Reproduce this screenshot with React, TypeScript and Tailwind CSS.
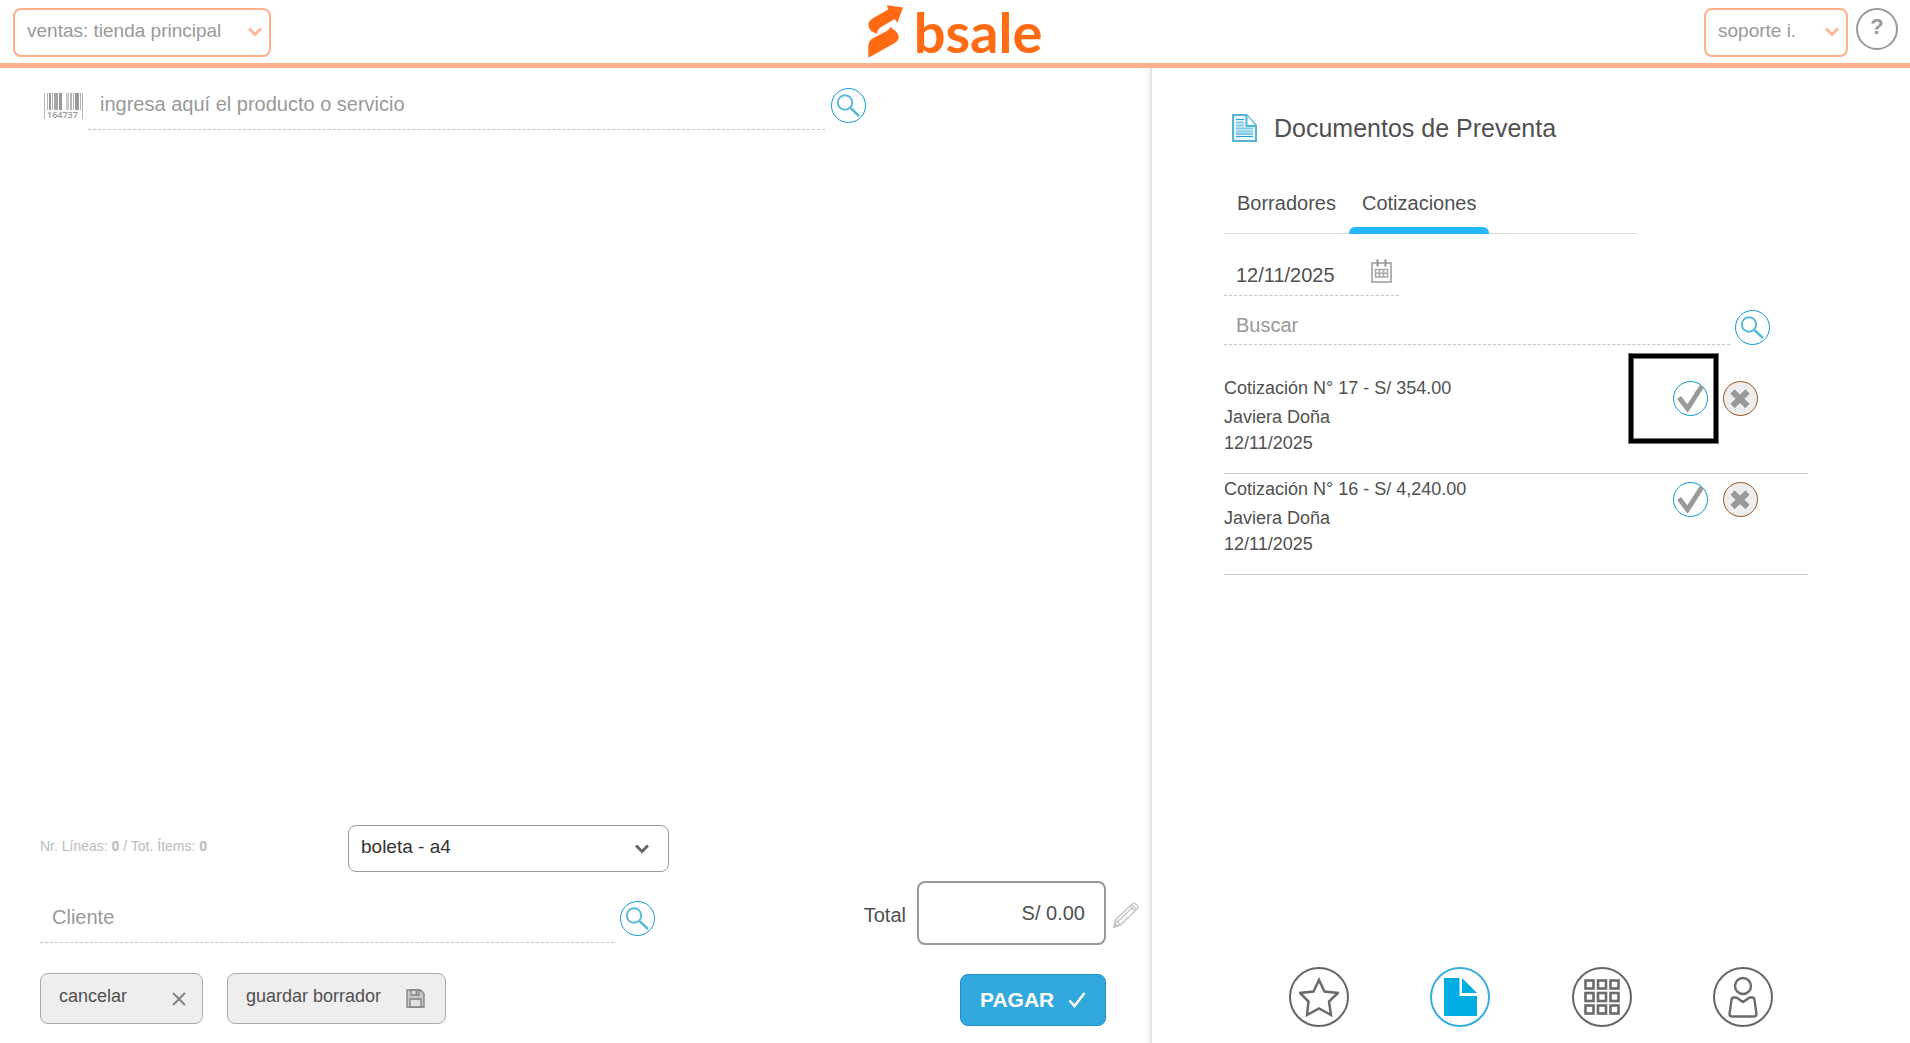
import { useState } from 'react';
import type { ReactNode } from 'react';
import clsx from 'clsx';

type Quote = {
  id: number;
  total: string;
  seller: string;
  date: string;
  highlighted?: boolean;
};

const QUOTES: Quote[] = [
  { id: 17, total: 'S/ 354.00', seller: 'Javiera Doña', date: '12/11/2025', highlighted: true },
  { id: 16, total: 'S/ 4,240.00', seller: 'Javiera Doña', date: '12/11/2025' },
];

const TABS = ['Borradores', 'Cotizaciones'];

const lineInput =
  'border-b border-dashed border-[#c4c4c4] bg-transparent px-3 text-[20px] text-[#505050] outline-none placeholder:text-[#999] placeholder:opacity-100';

/* ---------- icons ---------- */

function Chevron({ className }: { className?: string }) {
  return (
    <svg viewBox="0 0 14 10" className={className} fill="none" stroke="currentColor" strokeWidth="3">
      <path d="M1 1.5l6 6 6-6" />
    </svg>
  );
}

function LogoMark() {
  return (
    <svg viewBox="0 0 106 159" className="h-[53px] w-[35px]" fill="#ff6a13">
      <path d="M57 0L106 7L89 53L81 42L36 68Q28 74 28 87L9 78Q1 68 1 57Q3 46 15 39L61 13Z" />
      <path d="M1 159V124Q2 107 15 100L58 77Q67 73 67 65L86 80Q94 89 93 99Q91 108 81 114Z" />
    </svg>
  );
}

function Barcode() {
  return (
    <svg viewBox="0 0 39 28" className="h-[28px] w-[39px] overflow-visible">
      <g fill="#b5b5b5">
        <rect x="0" y="0" width="1" height="26" />
        <rect x="3" y="0" width="1" height="17" />
        <rect x="5" y="0" width="2" height="17" fill="#999" />
        <rect x="8" y="0" width="1" height="17" />
        <rect x="10" y="0" width="4" height="17" fill="#a5a5a5" />
        <rect x="15" y="0" width="3" height="17" fill="#999" />
        <rect x="22" y="0" width="3" height="17" fill="#ccc" />
        <rect x="26" y="0" width="2" height="17" />
        <rect x="29" y="0" width="1" height="17" />
        <rect x="31" y="0" width="4" height="17" fill="#999" />
        <rect x="36" y="0" width="1" height="17" />
        <rect x="38" y="0" width="1" height="26" />
      </g>
      <text x="3" y="25" fontSize="9" fontWeight="600" fontFamily="Open Sans, sans-serif" fill="#999">
        164737
      </text>
    </svg>
  );
}

function DocumentIcon() {
  return (
    <svg viewBox="0 0 25 28" className="h-[28px] w-[25px]" fill="none" stroke="#52b5d8">
      <path d="M1 1h13.500L24 11.500V27H1z" fill="#eaf7fc" strokeWidth="2" />
      <path d="M14.500 1v11H24" fill="#fff" strokeWidth="2" />
      <path d="M4 8.500h8M4 11.500h8M4 14.500h17M4 17.500h17M4 20h17" stroke="#7fcbe6" strokeWidth="2" />
      <path d="M4 5.500h8M4 22.500h17" stroke="#1d9fd0" />
    </svg>
  );
}

function CalendarIcon() {
  return (
    <svg viewBox="0 0 21 24" className="h-[24px] w-[21px]" fill="none" stroke="#aaa">
      <rect x="1" y="4" width="19" height="19" strokeWidth="1.800" />
      <path d="M6.500 0.500v7M14.500 0.500v7" stroke="#999" strokeWidth="2.200" />
      <path d="M4.500 10.500h12v7.500h-12zM8.500 10.500v7.500M12.500 10.500v7.500M4.500 14.300h12" strokeWidth="1.600" />
    </svg>
  );
}

function FloppyIcon() {
  return (
    <svg viewBox="0 0 19 19" className="h-[19px] w-[19px]" fill="#e0e0e0" stroke="#808080" strokeWidth="1.300">
      <path d="M1 1h13.500L18 4.500V18H1z" fill="#c8c8c8" />
      <path d="M5 1h8v5H5z" />
      <path d="M4 10h11v8H4z" />
      <path d="M10.500 2v3" strokeWidth="2" />
    </svg>
  );
}

function PencilIcon() {
  return (
    <svg viewBox="0 0 26 26" className="h-[26px] w-[26px]" fill="none" stroke="#c8c8c8" strokeWidth="1.500">
      <path d="M1 25l1.500-7L18.500 2.500Q21 0 23.500 2.500T24 7L7.500 23z" />
      <path d="M2.500 18l5 5M17 4l5 5M18.500 2.500l5 5M5 19.500L19.500 5.500" />
      <path d="M1 25l1-4 3 3z" fill="#aaa" />
    </svg>
  );
}

/* ---------- shared controls ---------- */

function SearchButton({ label }: { label: string }) {
  return (
    <button
      type="button"
      aria-label={label}
      className="size-[35px] shrink-0 rounded-full border border-[#0d9ad1] bg-white"
    >
      <svg viewBox="0 0 33 33" className="size-[33px]" fill="none" stroke="#5bb9de" strokeWidth="2">
        <circle cx="13" cy="13.500" r="7.200" />
        <path d="M18 18.500l1.500 1.500" strokeWidth="1.500" />
        <path d="M19 19.500l8 7.500" strokeWidth="2.500" />
      </svg>
    </button>
  );
}

function HeaderSelect({ label, value, className }: { label: string; value: string; className: string }) {
  return (
    <div className={clsx('relative', className)}>
      <select
        aria-label={label}
        className="h-[49px] w-full appearance-none rounded-lg border-2 border-[#ffaf88] bg-white pb-[2px] pl-3 text-[19px] text-[#999] outline-none"
      >
        <option>{value}</option>
      </select>
      <Chevron className="pointer-events-none absolute top-[19px] right-[9px] h-[10px] w-[14px] text-[#ffb794]" />
    </div>
  );
}

function NavButton({ label, active, children }: { label: string; active?: boolean; children: ReactNode }) {
  return (
    <button
      type="button"
      aria-label={label}
      className={clsx(
        'flex size-[60px] items-center justify-center rounded-full border-2 bg-white',
        active ? 'border-[#36aee0]' : 'border-[#666]',
      )}
    >
      {children}
    </button>
  );
}

/* ---------- sections ---------- */

function Header() {
  return (
    <header className="grid h-[68px] grid-cols-[1fr_auto_1fr] items-start border-b-[5px] border-[#ffb08a] bg-white">
      <HeaderSelect label="Sucursal" value="ventas: tienda principal" className="mt-2 ml-[13px] w-[258px]" />
      <a href="#" aria-label="bsale" className="mt-[5px] flex h-[53px] items-center gap-[11px]">
        <LogoMark />
        <span className="font-[Lato,sans-serif] text-[56px] leading-[53px] font-bold text-[#ff6a13]">bsale</span>
      </a>
      <div className="mt-2 mr-3 flex justify-end gap-2">
        <HeaderSelect label="Usuario" value="soporte i." className="w-[144px]" />
        <button
          type="button"
          aria-label="Ayuda"
          className="size-[42px] rounded-full border-2 border-[#999] pb-1 text-[22px] leading-none font-bold text-[#999]"
        >
          ?
        </button>
      </div>
    </header>
  );
}

function SalePanel() {
  return (
    <section className="flex flex-col justify-between border-r-2 border-[#e3e4e7] shadow-[inset_-4px_0_0_#f6f7f9]">
      <div className="flex items-center pt-[15px] pl-11">
        <Barcode />
        <input
          aria-label="Producto o servicio"
          placeholder="ingresa aquí el producto o servicio"
          className={clsx(lineInput, 'ml-[5px] h-[47px] w-2/3 pb-1')}
        />
        <span className="ml-[6px] flex pb-[2px]">
          <SearchButton label="Buscar producto" />
        </span>
      </div>

      <div className="flex items-end justify-between pr-[11px] pb-[17px] pl-10">
        <div className="pb-[2px]">
          <div className="flex items-center">
            <p className="w-[308px] pb-1 text-[14px] text-[#bbb]">
              Nr. Líneas: <b>0</b> / Tot. Ítems: <b>0</b>
            </p>
            <div className="relative w-[321px]">
              <select
                aria-label="Tipo de documento"
                className="h-[47px] w-full appearance-none rounded-lg border border-[#999] bg-white pb-[2px] pl-3 text-[19px] text-[#333] outline-none"
              >
                <option>boleta - a4</option>
              </select>
              <Chevron className="pointer-events-none absolute top-[19px] right-5 h-[10px] w-[14px] text-[#666]" />
            </div>
          </div>

          <div className="mt-6 flex items-center gap-[6px]">
            <input
              aria-label="Cliente"
              placeholder="Cliente"
              className={clsx(lineInput, 'h-[47px] w-[574px] pb-1')}
            />
            <span className="flex pb-[2px]">
              <SearchButton label="Buscar cliente" />
            </span>
          </div>

          <div className="mt-[30px] flex gap-6">
            <button
              type="button"
              className="flex h-[51px] w-[163px] items-center justify-between rounded-lg border border-[#aaa] bg-[#eee] pr-4 pl-[18px] text-[18px] text-[#505050]"
            >
              <span className="pb-1">cancelar</span>
              <svg viewBox="0 0 14 14" className="size-[14px]" stroke="#808080" strokeWidth="1.800">
                <path d="M1 1l12 12M13 1L1 13" />
              </svg>
            </button>
            <button
              type="button"
              className="flex h-[51px] w-[219px] items-center justify-between rounded-lg border border-[#aaa] bg-[#eee] pr-5 pl-[18px] text-[18px] text-[#505050]"
            >
              <span className="pb-1">guardar borrador</span>
              <FloppyIcon />
            </button>
          </div>
        </div>

        <div className="flex flex-col items-end">
          <div className="flex items-center">
            <label htmlFor="total" className="pt-1 pr-[11px] text-[20px] text-[#505050]">
              Total
            </label>
            <input
              id="total"
              readOnly
              value="S/ 0.00"
              className="h-16 w-[189px] rounded-lg border-2 border-[#999] pr-[19px] text-right text-[20px] text-[#505050] outline-none"
            />
            <button type="button" aria-label="Editar total" className="ml-[7px] pt-1">
              <PencilIcon />
            </button>
          </div>
          <button
            type="button"
            className="mt-[29px] mr-[33px] flex h-[52px] w-[146px] items-center justify-between rounded-lg border border-[#1f8fc4] bg-[#32a9de] px-[19px] text-[21px] font-bold text-white"
          >
            PAGAR
            <svg viewBox="0 0 18 16" className="h-4 w-[18px]" fill="none" stroke="#fff" strokeWidth="2.500">
              <path d="M1.500 8.500l5 5.500L16.500 1" />
            </svg>
          </button>
        </div>
      </div>
    </section>
  );
}

function QuoteRow({ quote }: { quote: Quote }) {
  return (
    <li className="flex h-[101px] justify-between border-b border-[#c8c8c8] pr-[50px] text-[18px] leading-[26px] text-[#505050]">
      <div className="pt-[2px]">
        <p>
          Cotización N° {quote.id} - {quote.total}
        </p>
        <p className="mt-[3px]">{quote.seller}</p>
        <p>{quote.date}</p>
      </div>
      <div className="flex gap-[15px] pt-2">
        <div className="relative size-[35px]">
          <button
            type="button"
            aria-label={`Aceptar cotización ${quote.id}`}
            className="size-[35px] overflow-hidden rounded-full border border-[#0d9ad1] bg-white"
          >
            <svg viewBox="0 0 33 33" className="size-[33px]" fill="none" stroke="#999" strokeWidth="5">
              <path d="M5 15.500l8.500 11L28 4" />
            </svg>
          </button>
          {quote.highlighted && (
            <span className="pointer-events-none absolute -top-7 -left-[45px] size-[91px] border border-[#777]">
              <span className="block size-full border-4 border-black">
                <span className="block size-full border border-[#777]" />
              </span>
            </span>
          )}
        </div>
        <button
          type="button"
          aria-label={`Eliminar cotización ${quote.id}`}
          className="size-[35px] rounded-full border border-[#a0521f] bg-[#eee]"
        >
          <svg viewBox="0 0 33 33" className="size-[33px]" stroke="#999" strokeWidth="6">
            <path d="M8.500 9.500l15 14.500M23.500 9.500l-15 14.500" />
          </svg>
        </button>
      </div>
    </li>
  );
}

function BottomNav() {
  return (
    <nav className="ml-[65px] flex max-w-[484px] justify-between pb-4">
      <NavButton label="Favoritos">
        <svg viewBox="0 0 40 40" className="size-10 shrink-0" fill="none" stroke="#6b6b6b" strokeWidth="2.500">
          <path d="M20 3l5.500 11.500L39 16l-9 8.500L32 38l-12-6.500L8 38l1.500-13.500L1 16l13.500-1.500z" />
        </svg>
      </NavButton>
      <NavButton label="Documentos" active>
        <svg viewBox="0 0 33 38" className="h-[38px] w-[33px]" fill="#00ade2">
          <path d="M0 0h15.500v18H33v20H0z" />
          <path d="M18 0L33 15H18z" />
        </svg>
      </NavButton>
      <NavButton label="Categorías">
        <svg viewBox="0 0 36 36" className="size-9" fill="none" stroke="#6b6b6b" strokeWidth="2.600">
          {[1.5, 14, 26.5].map((y) =>
            [1.5, 14, 26.5].map((x) => <rect key={`${x}-${y}`} x={x} y={y} width="8" height="8" />),
          )}
        </svg>
      </NavButton>
      <NavButton label="Clientes">
        <svg viewBox="0 0 30 42" className="h-[42px] w-[30px]" fill="none" stroke="#6b6b6b" strokeWidth="2.400">
          <circle cx="15" cy="10" r="8" />
          <path d="M6 21.500q-2.300 0-2.500 2.300L1.500 38q0 2.500 2.500 2.500h22q2.500 0 2.500-2.500L26.500 23.800q-.2-2.300-2.500-2.300h-2q-1 0-2.200 1.200L15 26l-4.800-3.300Q9 21.500 8 21.500z" />
        </svg>
      </NavButton>
    </nav>
  );
}

function PresalePanel() {
  const [tab, setTab] = useState('Cotizaciones');

  return (
    <aside className="flex flex-col justify-between pl-[72px]">
      <div className="pt-11">
        <h1 className="flex h-8 items-center gap-[17px] pl-2 text-[25px] text-[#505050]">
          <DocumentIcon />
          <span className="pt-[2px]">Documentos de Preventa</span>
        </h1>

        <div role="tablist" className="mt-[45px] flex max-w-[413px] border-b border-[#ddd]">
          {TABS.map((name) => (
            <button
              key={name}
              type="button"
              role="tab"
              aria-selected={tab === name}
              onClick={() => setTab(name)}
              className="-mb-px flex flex-col text-[20px] leading-7 text-[#505050]"
            >
              <span className="px-[13px] pb-[10px]">{name}</span>
              <span className={clsx('h-[7px] w-full rounded-t-md', tab === name && 'bg-[#24b8ff]')} />
            </button>
          ))}
        </div>

        <div className="mt-[21px] flex h-[41px] w-[175px] border-b border-dashed border-[#c4c4c4]">
          <input
            aria-label="Fecha"
            defaultValue="12/11/2025"
            className="w-[147px] bg-transparent pl-3 text-[20px] text-[#505050] outline-none"
          />
          <button type="button" aria-label="Abrir calendario" className="h-8">
            <CalendarIcon />
          </button>
        </div>

        <div className="mt-[9px] flex items-end gap-[5px]">
          <input aria-label="Buscar" placeholder="Buscar" className={clsx(lineInput, 'h-10 w-[506px] pt-[2px]')} />
          <SearchButton label="Buscar documento" />
        </div>

        <ul className="mt-7 max-w-[584px]">
          {QUOTES.map((quote) => (
            <QuoteRow key={quote.id} quote={quote} />
          ))}
        </ul>
      </div>

      <BottomNav />
    </aside>
  );
}

export default function App() {
  return (
    <div className="flex min-h-screen flex-col bg-white font-['Liberation_Sans',Arial,sans-serif]">
      <Header />
      <main className="grid flex-1 grid-cols-[1152fr_758fr]">
        <SalePanel />
        <PresalePanel />
      </main>
    </div>
  );
}
